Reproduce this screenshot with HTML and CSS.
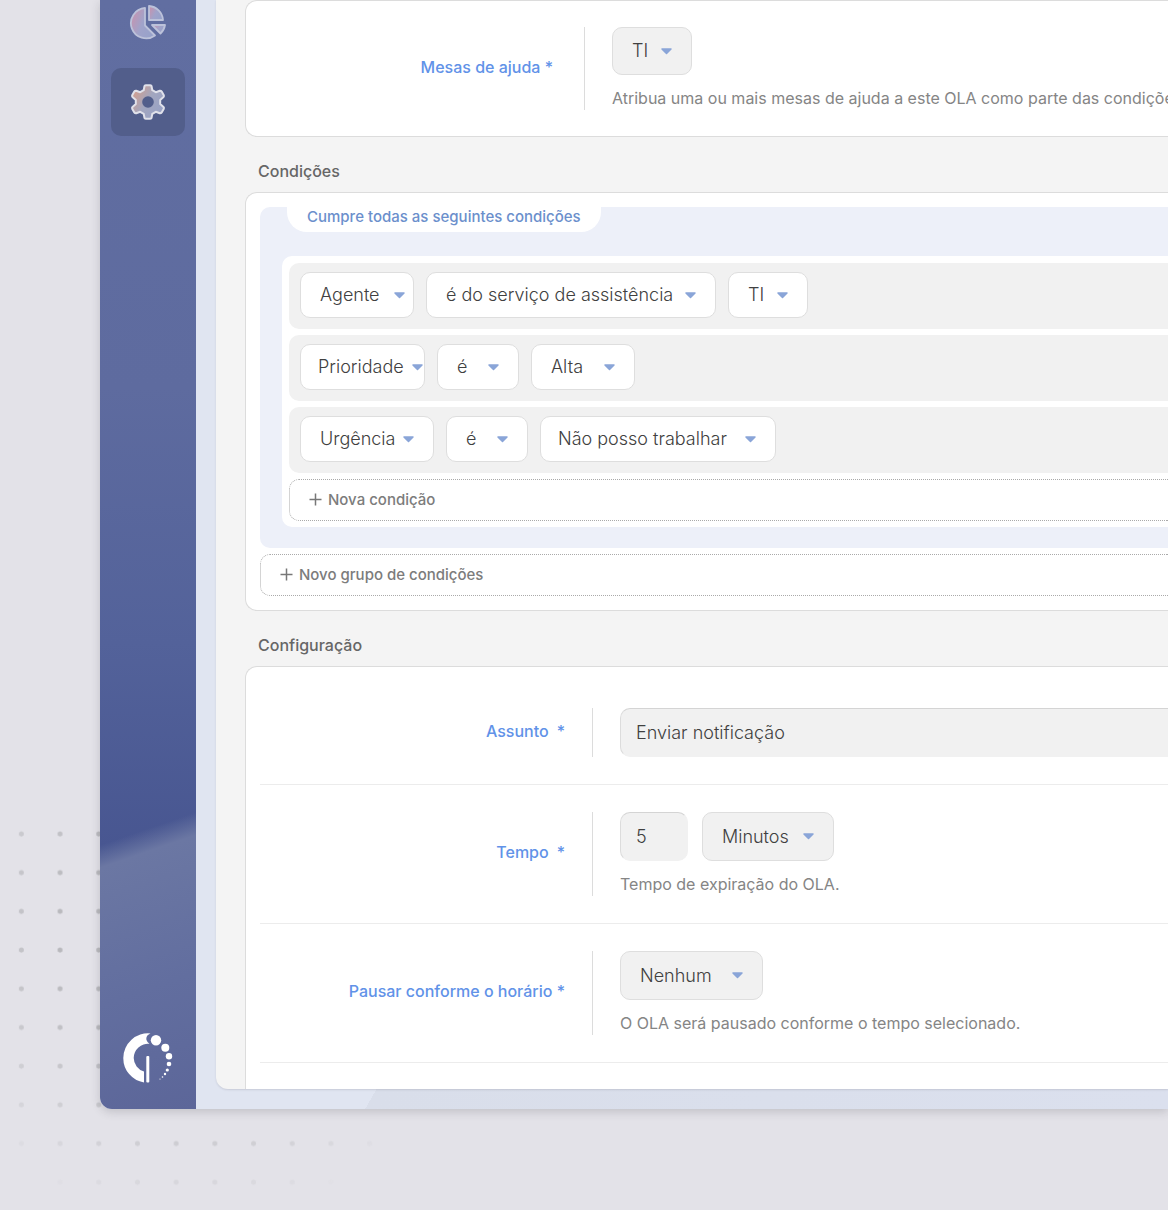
FILE: index.html
```html
<!DOCTYPE html>
<html lang="pt-BR">
<head>
    <meta charset="UTF-8">
    <meta name="viewport" content="width=device-width, initial-scale=1.0">
    <title>OLA - Condições e configuração</title>
    <link rel="stylesheet" href="styles.css">
</head>
<body>
    <svg class="dots" width="420" height="390" viewBox="0 0 420 390" aria-hidden="true">
        <defs>
            <pattern id="dot" x="2" y="0" width="38.7" height="38.7" patternUnits="userSpaceOnUse">
                <circle cx="19.35" cy="14" r="2.5" fill="#b9b9bd"/>
            </pattern>
            <radialGradient id="fade" gradientUnits="userSpaceOnUse" cx="190" cy="115" r="290">
                <stop offset="0.45" stop-color="#fff"/>
                <stop offset="1" stop-color="#000"/>
            </radialGradient>
            <mask id="dotMask"><rect width="420" height="390" fill="url(#fade)"/></mask>
        </defs>
        <rect width="420" height="390" fill="url(#dot)" mask="url(#dotMask)"/>
    </svg>

    <div class="window">
        <nav class="sidebar">
            <a class="nav-item" href="#" aria-label="Relatórios">
                <svg width="38" height="38" viewBox="0 0 38 38">
                    <defs>
                        <linearGradient id="pie" x1="0" y1="0.2" x2="1" y2="0.7">
                            <stop offset="0" stop-color="#c893ae"/>
                            <stop offset="0.5" stop-color="#a0a3ca"/>
                            <stop offset="1" stop-color="#97a2ca"/>
                        </linearGradient>
                    </defs>
                    <g fill="url(#pie)" stroke="#bcc2da" stroke-width="1.8" stroke-linejoin="round">
                        <path d="M16 5 A15.200 15.200 0 1 0 26 32.500 L16 22.500 Z"/>
                        <path d="M20 3 A15 15 0 0 1 34 17 H20 Z"/>
                        <path d="M23 22 H36 A15 15 0 0 1 31.500 30.500 Z"/>
                    </g>
                </svg>
            </a>
            <a class="nav-item active" href="#" aria-label="Configurações">
                <svg width="38" height="38" viewBox="0 0 38 38">
                    <defs>
                        <linearGradient id="gear" x1="0" y1="0.1" x2="1" y2="0.8">
                            <stop offset="0.1" stop-color="#cf9f92"/>
                            <stop offset="0.5" stop-color="#a2a6bf"/>
                            <stop offset="1" stop-color="#98a2c6"/>
                        </linearGradient>
                    </defs>
                    <path fill="url(#gear)" stroke="#e0e1ea" stroke-width="2" stroke-linejoin="round" d="M15.500 3 Q16 2.200 17 2.200 H21 Q22 2.200 22.500 3 L23.300 7.200 L26.800 9.200 L30.800 7.700 Q32 7.500 32.700 8.600 L34.800 12.200 Q35.200 13.200 34.500 14 L31.200 16.900 V21.100 L34.500 24 Q35.200 24.800 34.800 25.800 L32.700 29.400 Q32 30.500 30.800 30.300 L26.800 28.800 L23.300 30.800 L22.500 35 Q22 35.800 21 35.800 H17 Q16 35.800 15.500 35 L14.700 30.800 L11.200 28.800 L7.200 30.300 Q6 30.500 5.300 29.400 L3.200 25.800 Q2.800 24.800 3.500 24 L6.800 21.100 V16.900 L3.500 14 Q2.800 13.200 3.200 12.200 L5.300 8.600 Q6 7.500 7.200 7.700 L11.200 9.200 L14.700 7.200 Z"/>
                    <circle cx="19" cy="19" r="5.800" fill="#525e8b"/>
                </svg>
            </a>
            <svg class="logo" width="50" height="50" viewBox="0 0 50 50" fill="#fff" aria-hidden="true">
                <path d="M21 49.500 A24.700 24.700 0 0 1 0.300 25 A24.700 24.700 0 0 1 27.500 0.500 Q22.500 2.500 23.500 7 Q24.500 10 26.500 10.800 A14.300 14.300 0 0 0 10.700 25 A14.300 14.300 0 0 0 21 38.500 Z"/>
                <rect x="23.300" y="23" width="3" height="26.500" rx="1"/>
                <circle cx="33" cy="7.300" r="5.200"/>
                <circle cx="42.300" cy="14.700" r="4"/>
                <circle cx="46" cy="23.300" r="3.200"/>
                <circle cx="46" cy="31" r="2.300"/>
                <circle cx="44.300" cy="37" r="1.600"/>
                <circle cx="42" cy="41" r="1.200"/>
                <circle cx="39.500" cy="44" r="0.800"/>
                <circle cx="37" cy="46" r="0.600"/>
            </svg>
        </nav>

        <main class="panel">
            <section class="card card-desks">
                <div class="row">
                    <label class="label" for="desk">Mesas de ajuda *</label>
                    <div class="field">
                        <select class="select filled w-ti" id="desk"><option>TI</option></select>
                        <p class="help">Atribua uma ou mais mesas de ajuda a este OLA como parte das condições.</p>
                    </div>
                </div>
            </section>

            <h2 class="title">Condições</h2>
            <section class="card card-conditions">
                <div class="group">
                    <div class="group-tab">Cumpre todas as seguintes condições</div>
                    <div class="conditions">
                        <div class="condition">
                            <select class="select w-agent" aria-label="Campo"><option>Agente</option></select>
                            <select class="select w-service" aria-label="Operador"><option>é do serviço de assistência</option></select>
                            <select class="select w-ti" aria-label="Valor"><option>TI</option></select>
                        </div>
                        <div class="condition">
                            <select class="select w-priority" aria-label="Campo"><option>Prioridade</option></select>
                            <select class="select w-is" aria-label="Operador"><option>é</option></select>
                            <select class="select w-high" aria-label="Valor"><option>Alta</option></select>
                        </div>
                        <div class="condition">
                            <select class="select w-urgency" aria-label="Campo"><option>Urgência</option></select>
                            <select class="select w-is" aria-label="Operador"><option>é</option></select>
                            <select class="select w-work" aria-label="Valor"><option>Não posso trabalhar</option></select>
                        </div>
                        <button class="add" type="button">
                            <svg width="13" height="13" viewBox="0 0 13 13"><path d="M6.500 0.500 V12.500 M0.500 6.500 H12.500" stroke="#777" stroke-width="1.500"/></svg>
                            Nova condição
                        </button>
                    </div>
                </div>
                <button class="add" type="button">
                    <svg width="13" height="13" viewBox="0 0 13 13"><path d="M6.500 0.500 V12.500 M0.500 6.500 H12.500" stroke="#777" stroke-width="1.500"/></svg>
                    Novo grupo de condições
                </button>
            </section>

            <h2 class="title">Configuração</h2>
            <section class="card card-config">
                <div class="row">
                    <label class="label" for="subject">Assunto <span class="star">*</span></label>
                    <div class="field">
                        <input class="input" id="subject" type="text" value="Enviar notificação">
                    </div>
                </div>
                <div class="row">
                    <label class="label" for="time">Tempo <span class="star">*</span></label>
                    <div class="field">
                        <div class="inline">
                            <input class="input input-number" id="time" type="text" value="5">
                            <select class="select filled w-minutes" aria-label="Unidade"><option>Minutos</option></select>
                        </div>
                        <p class="help">Tempo de expiração do OLA.</p>
                    </div>
                </div>
                <div class="row">
                    <label class="label" for="pause">Pausar conforme o horário *</label>
                    <div class="field">
                        <select class="select filled w-none" id="pause"><option>Nenhum</option></select>
                        <p class="help">O OLA será pausado conforme o tempo selecionado.</p>
                    </div>
                </div>
            </section>
        </main>
    </div>
</body>
</html>
```
FILE: styles.css
```css
* {
    margin: 0;
    padding: 0;
    box-sizing: border-box;
}

body {
    min-height: 100vh;
    padding: 0 0 101px 100px;
    position: relative;
    overflow: hidden;
    background: #e3e2e8;
    color: #4a4a4a;
    font-family: Inter, "Liberation Sans", sans-serif;
}

/* Dotted backdrop behind the window */
.dots {
    position: absolute;
    left: 0;
    top: 820px;
}

.window {
    position: relative;
    display: flex;
    border-radius: 0 0 0 12px;
    background: linear-gradient(120deg, #e0e5f1 0%, #e0e5f1 53%, #d9deea 53%, #dbe0ee 100%);
    box-shadow: 0 3px 10px rgba(60, 60, 70, 0.2);
}

/* Sidebar */
.sidebar {
    width: 96px;
    flex-shrink: 0;
    display: flex;
    flex-direction: column;
    align-items: center;
    padding-bottom: 26px;
    border-radius: 0 0 0 12px;
    background:
        linear-gradient(161deg, transparent 74%, #6b77a3 76%, #626e9f 88%, #5c6699 100%),
        linear-gradient(#616ea1 0%, #5e6b9f 35%, #53629a 58%, #475590 78%);
}

.nav-item {
    width: 74px;
    height: 68px;
    display: flex;
    align-items: center;
    justify-content: center;
    border-radius: 10px;
}

.nav-item:first-child {
    height: 44px;
    margin-bottom: 24px;
}

.nav-item.active {
    background: #525e8b;
}

.logo {
    margin-top: auto;
}

/* Content */
.panel {
    flex: 1;
    min-width: 0;
    margin: 0 0 20px 20px;
    padding-left: 29px;
    background: #f4f4f4;
    border-radius: 0 0 0 12px;
    box-shadow: 0 1px 2px rgba(60, 60, 80, 0.15);
    overflow: hidden;
}

.title {
    padding-left: 13px;
    font-size: 16px;
    line-height: 20px;
    font-weight: 500;
    color: #666;
    margin: 24px 0 11px;
}

.card {
    background: #fff;
    border: 1px solid #dcdcdc;
    border-right: none;
    border-radius: 12px 0 0 12px;
}

.card-conditions {
    padding: 14px 0 14px 14px;
}

.card-config {
    padding: 14px 0 26px 14px;
    border-bottom: none;
    border-bottom-left-radius: 0;
}

.row {
    display: flex;
    padding: 27px 0;
    border-bottom: 1px solid #ececec;
}

.card-desks .row {
    padding: 26px 0;
    border-bottom: none;
}

.label {
    width: 333px;
    flex-shrink: 0;
    display: flex;
    align-items: center;
    justify-content: flex-end;
    gap: 8px;
    padding: 0 27px 4px 0;
    border-right: 1px solid #dcdcdc;
    font-size: 16px;
    line-height: 20px;
    font-weight: 500;
    color: #6192e8;
}

.card-desks .label {
    width: 339px;
    padding-right: 31px;
}

.field {
    flex: 1;
    min-width: 0;
    padding-left: 27px;
}

.inline {
    display: flex;
    gap: 14px;
}

.help {
    margin-top: 11px;
    font-size: 16px;
    line-height: 24px;
    color: #858585;
    white-space: nowrap;
}

.select {
    display: block;
    height: 46px;
    padding-left: 19px;
    border: 1px solid #dedede;
    border-radius: 10px;
    appearance: none;
    background: #fff url("data:image/svg+xml,%3Csvg xmlns='http://www.w3.org/2000/svg' width='11' height='7'%3E%3Cpath d='M1 1H10L5.500 5.500Z' fill='%238aa5d8' stroke='%238aa5d8' stroke-width='1.500' stroke-linejoin='round'/%3E%3C/svg%3E") no-repeat right 19px center;
    color: #404040;
    font-family: inherit;
    font-size: 18px;
    font-weight: 300;
    line-height: 22px;
}

.filled,
.input {
    height: 49px;
    background-color: #f1f1f1;
}

.card-desks .filled {
    height: 48px;
}

.input {
    display: block;
    width: 100%;
    padding: 0 15px;
    border: 1px solid #f1f1f1;
    border-top-color: #d4d4d4;
    border-left-color: #dcdcdc;
    border-radius: 10px;
    color: #404040;
    font-family: inherit;
    font-size: 18px;
    font-weight: 300;
}

#subject {
    border-right: none;
    border-radius: 10px 0 0 10px;
}

.input-number {
    width: 68px;
}

.w-ti { width: 80px; }
.w-agent { width: 114px; background-position: right 8px center; }
.w-service { width: 290px; }
.w-priority { width: 125px; padding-left: 17px; background-position: right 1px center; }
.w-is { width: 82px; }
.w-high { width: 104px; }
.w-urgency { width: 134px; }
.w-work { width: 236px; padding-left: 17px; }
.w-minutes { width: 132px; }
.w-none { width: 143px; }

/* Condition builder */
.group {
    padding: 0 0 21px 22px;
    background: #edf0f9;
    border-radius: 10px 0 0 10px;
}

.group-tab {
    width: fit-content;
    height: 25px;
    margin: 0 0 24px 5px;
    padding: 0 20px;
    border-radius: 0 0 20px 20px;
    background: #fff;
    font-size: 15px;
    line-height: 20px;
    font-weight: 500;
    color: #6b8fcc;
}

.conditions {
    display: flex;
    flex-direction: column;
    gap: 6px;
    padding: 7px 0 6px 7px;
    background: #fff;
    border-radius: 10px 0 0 10px;
}

.condition {
    display: flex;
    gap: 12px;
    height: 66px;
    padding: 9px 11px;
    background: #f1f1f1;
    border-radius: 10px 0 0 10px;
}

.add {
    width: 100%;
    height: 42px;
    display: flex;
    align-items: center;
    gap: 6px;
    padding: 0 0 2px 19px;
    border: 1px dotted #aaa;
    border-right: none;
    border-radius: 10px 0 0 10px;
    background: #fff;
    color: #7c7c7c;
    font-family: inherit;
    font-size: 15px;
    font-weight: 500;
}

.group + .add {
    margin-top: 6px;
}
```
